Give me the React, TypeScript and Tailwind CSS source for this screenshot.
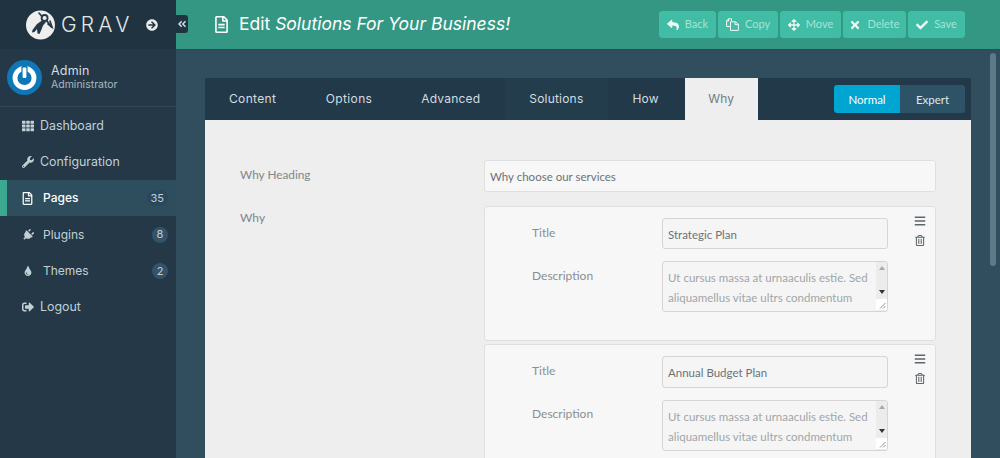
import { ReactNode } from "react";
import {
  FaAngleDoubleLeft,
  FaArrowCircleRight,
  FaArrowsAlt,
  FaBars,
  FaCheck,
  FaPlug,
  FaRegFileAlt,
  FaRegTrashAlt,
  FaReply,
  FaSignOutAlt,
  FaTh,
  FaTimes,
  FaTint,
  FaWrench,
} from "react-icons/fa";

const heading = "font-['Inter','Liberation_Sans',sans-serif]";
const body = "font-['Lato','Liberation_Sans',sans-serif]";

const GravLogo = () => (
  <svg width="29" height="30" viewBox="0 0 29 30">
    <circle cx="14.5" cy="15" r="14.5" fill="#eeeeee" />
    <path d="M13 3l3 3.5M24 11l2 6-4-3" fill="none" stroke="#243847" strokeWidth="1.6" strokeLinecap="round" />
    <circle cx="18.6" cy="8" r="3" fill="none" stroke="#243847" strokeWidth="1.8" />
    <path d="M16 10.5l-5 3.5-4.5 6-.5 2.5 2.5-.5 2.5-3 .5 4.5 2 .5 2-4.5 1.5-4 3-3.5z" fill="#243847" />
    <path d="M21 11l4.5 6" fill="none" stroke="#243847" strokeWidth="1.8" strokeLinecap="round" />
  </svg>
);

const PowerAvatar = () => (
  <svg width="35" height="35" viewBox="0 0 35 35">
    <circle cx="17.5" cy="17.5" r="17.5" fill="#0f77b5" />
    <circle cx="17.5" cy="18" r="9.5" fill="none" stroke="#fff" strokeWidth="4.8" />
    <rect x="14.4" y="6" width="6.2" height="12.5" rx="1.4" fill="#0f77b5" />
    <rect x="15.6" y="7.5" width="3.8" height="10.5" rx="1.2" fill="#fff" />
  </svg>
);

const CopyIcon = () => (
  <svg width="13" height="13" viewBox="0 0 13 13" fill="none" stroke="#eef9f6" strokeWidth="1">
    <path d="M5.5 3.5V.8H2.5L.6 2.8v5.7h3.9" />
    <path d="M.6 3h2V.8" />
    <path d="M4.5 3.8h5l2.9 2.4v6.2H4.5z" />
    <path d="M9 4v2.6h3" />
  </svg>
);

const NavItem = ({ icon, label, badge, active, indent }: { icon: ReactNode; label: string; badge?: string; active?: boolean; indent?: boolean }) => (
  <div className={`flex h-[36.2px] items-center pt-[1px] ${heading} ${indent ? "text-[12px]" : "text-[12.4px]"} ${active ? "border-l-[7px] border-[#3ba88f] bg-[#2e4d5d] pl-[13px] font-medium text-white" : "pl-[20px] text-[#c2d0d6]"}`}>
    <span className="flex w-[15px] justify-center text-[12px]">{icon}</span>
    <span className={indent ? "ml-[8px]" : "ml-[5px]"}>{label}</span>
    {badge && (
      <span className={`ml-auto mr-[8px] flex h-[16px] min-w-[16px] items-center justify-center rounded-full px-[4px] text-[11px] font-normal text-[#c2d0d6] ${active ? "bg-[#2a485c]" : "bg-[#32536a]"}`}>
        {badge}
      </span>
    )}
  </div>
);

const HeaderButton = ({ icon, label, width }: { icon: ReactNode; label: string; width: string }) => (
  <button className={`flex h-[27px] ${width} items-center justify-center gap-[6px] rounded-[3px] bg-[#41bda5] text-[11px] text-[#a5e3d5] ${body}`}>
    <span className="text-[12px] text-[#eef9f6]">{icon}</span>
    {label}
  </button>
);

const Tab = ({ label, active, hover, className }: { label: string; active?: boolean; hover?: boolean; className: string }) => (
  <div className={`flex h-full items-center text-[12px] ${className} ${heading} ${active ? "bg-[#eeeeee] text-[#737c81]" : hover ? "bg-[#243d4d] text-[#d3dce0]" : "text-[#d3dce0]"}`}>
    {label}
  </div>
);

const FakeScroll = () => (
  <div className="flex h-full w-[11px] flex-col items-center rounded-r-[3px] bg-[#ececec] pt-[4px]">
    <span className="h-0 w-0 border-x-[3px] border-b-[4px] border-x-transparent border-b-[#a9a9a9]" />
    <span className="mt-auto h-0 w-0 border-x-[3px] border-t-[4px] border-x-transparent border-t-[#333]" />
    <span className="mb-[1px] mt-[5px] flex h-[11px] w-[11px] items-end justify-end bg-white pb-[1px] pr-[1px]">
      <svg width="7" height="7" viewBox="0 0 7 7">
        <path d="M1 6.5L6.5 1M4 6.5L6.5 4" stroke="#777" strokeWidth="0.8" />
      </svg>
    </span>
  </div>
);

const CollectionItem = ({ title, inputHeight }: { title: string; inputHeight: string }) => (
  <div className={`flex h-[135px] w-[452px] shrink-0 rounded-[3px] border border-[#dfdfdf] bg-[#f7f7f7] pt-[11px] text-[11.5px] ${body}`}>
    <div className="w-[177px] pl-[47px] text-[12px] text-[#8a8f92]">
      <div className="flex h-[28px] items-center pt-[2px]">Title</div>
      <div className="mt-[14px] flex h-[30px] items-center pt-[2px]">Description</div>
    </div>
    <div className="w-[226px]">
      <div className={`flex ${inputHeight} items-center rounded-[3px] border border-[#d5d5d5] bg-[#f5f5f5] px-[5px] pt-[2px] text-[#6c7276]`}>{title}</div>
      <div className="mt-[12px] flex h-[51px] rounded-[3px] border border-[#d5d5d5] bg-[#f5f5f5]">
        <div className="flex-1 whitespace-nowrap pl-[5px] pt-[6px] leading-[20px] text-[#a1a5a8]">
          Ut cursus massa at urnaaculis estie. Sed
          <br />
          aliquamellus vitae ultrs condmentum
        </div>
        <FakeScroll />
      </div>
    </div>
    <div className="-mt-[3px] ml-[26px] flex flex-col items-center gap-[8px] text-[#5c666c]">
      <FaBars className="h-[12px] w-[12px]" />
      <FaRegTrashAlt className="h-[11px] w-[10px]" />
    </div>
  </div>
);

export default function App() {
  return (
    <div className="relative flex h-[458px] w-[1000px] overflow-hidden bg-[#314e5e]">
      <aside className="flex h-full w-[176px] shrink-0 flex-col bg-[#243847]">
        <div className="flex h-[49px] items-center bg-[#1f3341] pl-[26px]">
          <GravLogo />
          <span className={`ml-[6px] text-[21px] font-light tracking-[4.2px] text-[#e4e7e8] ${heading}`}>GRAV</span>
          <FaArrowCircleRight className="ml-[12px] h-[12px] w-[12px] text-[#e9eced]" />
        </div>
        <div className="flex h-[58px] items-center border-b border-[#2f4858] pl-[7px]">
          <PowerAvatar />
          <div className={`ml-[9px] ${heading}`}>
            <div className="text-[12.5px] leading-[15px] tracking-[0.2px] text-[#d5dde1]">Admin</div>
            <div className="text-[10.5px] leading-[14px] text-[#a9b8c0]">Administrator</div>
          </div>
        </div>
        <nav className="pt-[0.5px]">
          <NavItem icon={<FaTh />} label="Dashboard" />
          <NavItem icon={<FaWrench />} label="Configuration" />
          <NavItem icon={<FaRegFileAlt className="h-[13px] w-[11px]" />} label="Pages" badge="35" active indent />
          <NavItem icon={<FaPlug className="rotate-45" />} label="Plugins" badge="8" indent />
          <NavItem icon={<FaTint className="h-[10px]" />} label="Themes" badge="2" indent />
          <NavItem icon={<FaSignOutAlt />} label="Logout" />
        </nav>
      </aside>

      <main className="flex min-w-0 flex-1 flex-col">
        <header className="flex h-[49px] shrink-0 items-center bg-[#349784] pl-[38px] pr-[35px] shadow-[0_1px_0_#24504f]">
          <FaRegFileAlt className="h-[17px] w-[15px] text-white" />
          <h1 className={`ml-[10px] text-[17.5px] text-white ${heading}`}>
            Edit <em>Solutions For Your Business!</em>
          </h1>
          <div className="ml-auto flex gap-[2px]">
            <HeaderButton icon={<FaReply />} label="Back" width="w-[57px]" />
            <HeaderButton icon={<CopyIcon />} label="Copy" width="w-[60px]" />
            <HeaderButton icon={<FaArrowsAlt />} label="Move" width="w-[61px]" />
            <HeaderButton icon={<FaTimes />} label="Delete" width="w-[63px]" />
            <HeaderButton icon={<FaCheck />} label="Save" width="w-[57px]" />
          </div>
        </header>

        <section className="ml-[29px] mt-[29px] w-[766px]">
          <div className="flex h-[42px] items-stretch bg-[#22394a]">
            <Tab label="Content" className="pl-[24px] pr-[25px] tracking-[0.35px]" />
            <Tab label="Options" className="px-[24.5px] tracking-[0.35px]" />
            <Tab label="Advanced" className="px-[24.5px] tracking-[0.2px]" />
            <Tab label="Solutions" hover className="px-[24.5px] tracking-[0.2px]" />
            <Tab label="How" className="pl-[24.5px] pr-[26px] tracking-[0.2px]" />
            <Tab label="Why" active className="w-[73px] justify-center tracking-[0.2px]" />
            <div className={`ml-auto mr-[6px] mt-[7px] flex h-[28px] text-[11.5px] text-[#dfe8ec] ${body}`}>
              <span className="flex w-[66px] items-center justify-center rounded-l-[3px] bg-[#00a5d1] pt-[1px] text-white">Normal</span>
              <span className="flex w-[65px] items-center justify-center rounded-r-[3px] bg-[#2f5366] pt-[1px]">Expert</span>
            </div>
          </div>
          <div className="h-[400px] bg-[#eeeeee] pt-[40px]">
            <div className={`flex text-[12px] ${body}`}>
              <div className="flex h-[30px] w-[279px] items-center pl-[35px] text-[11.8px] text-[#80868a]">Why Heading</div>
              <div className="flex h-[32px] w-[452px] items-center rounded-[3px] border border-[#dfdfdf] bg-[#f7f7f7] px-[5px] pt-[2px] text-[11.5px] text-[#6c7276]">Why choose our services</div>
            </div>
            <div className="mt-[14px] flex">
              <div className={`w-[279px] pl-[35px] pt-[3px] text-[12px] text-[#80868a] ${body}`}>Why</div>
              <div className="flex flex-col gap-[3px]">
                <CollectionItem title="Strategic Plan" inputHeight="h-[31px]" />
                <CollectionItem title="Annual Budget Plan" inputHeight="h-[32px]" />
              </div>
            </div>
          </div>
        </section>
      </main>

      <button className="absolute left-[176px] top-[15px] flex h-[18px] w-[12px] items-center justify-center rounded-r-[3px] bg-[#1f3341] text-[#d5dde1]">
        <FaAngleDoubleLeft className="h-[10px] w-[10px]" />
      </button>
      <div className="absolute left-[990px] top-[53px] h-[213px] w-[6px] rounded-full bg-[#5f7a87]" />
    </div>
  );
}
